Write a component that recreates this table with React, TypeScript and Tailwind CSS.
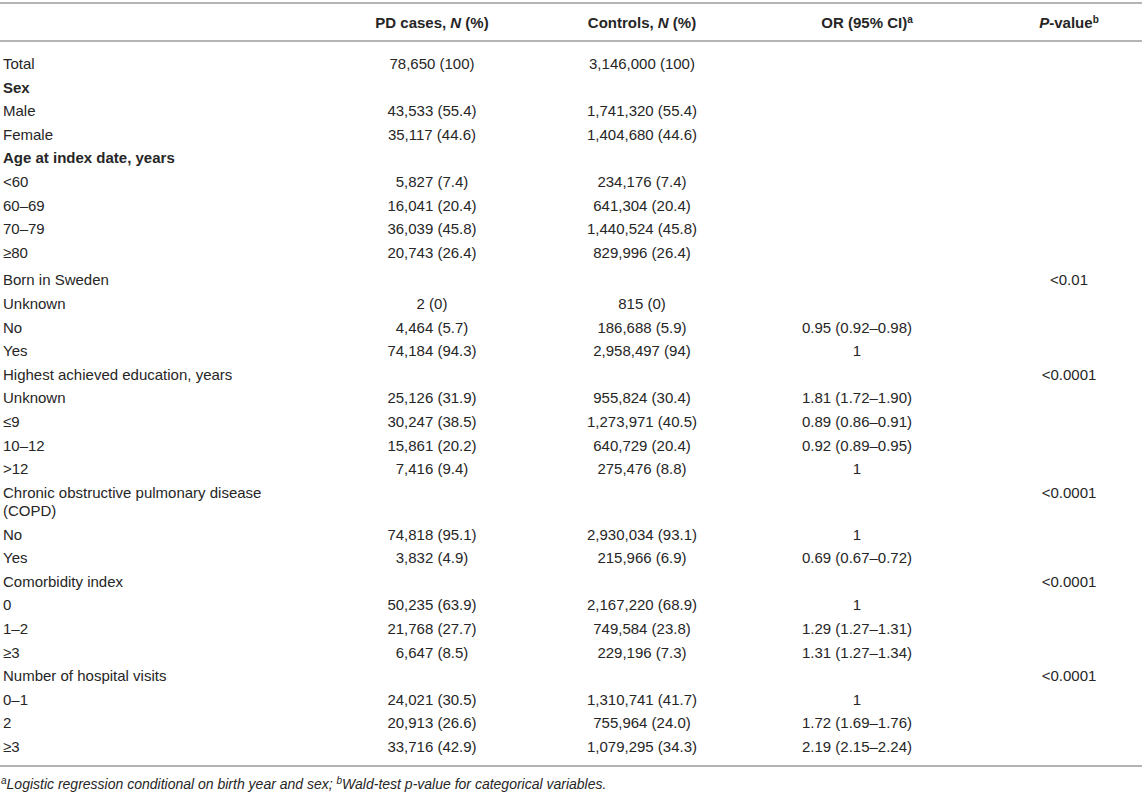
import React from 'react';

type Row = {
  label: React.ReactNode;
  pd?: string;
  ctrl?: string;
  or?: string;
  p?: string;
  bold?: boolean;
  tall?: boolean;
  gap?: boolean;
};

const rows: Row[] = [
  { label: 'Total', pd: '78,650 (100)', ctrl: '3,146,000 (100)' },
  { label: 'Sex', bold: true },
  { label: 'Male', pd: '43,533 (55.4)', ctrl: '1,741,320 (55.4)' },
  { label: 'Female', pd: '35,117 (44.6)', ctrl: '1,404,680 (44.6)' },
  { label: 'Age at index date, years', bold: true },
  { label: '<60', pd: '5,827 (7.4)', ctrl: '234,176 (7.4)' },
  { label: '60–69', pd: '16,041 (20.4)', ctrl: '641,304 (20.4)' },
  { label: '70–79', pd: '36,039 (45.8)', ctrl: '1,440,524 (45.8)' },
  { label: '≥80', pd: '20,743 (26.4)', ctrl: '829,996 (26.4)' },
  { label: 'Born in Sweden', p: '<0.01', gap: true },
  { label: 'Unknown', pd: '2 (0)', ctrl: '815 (0)' },
  { label: 'No', pd: '4,464 (5.7)', ctrl: '186,688 (5.9)', or: '0.95 (0.92–0.98)' },
  { label: 'Yes', pd: '74,184 (94.3)', ctrl: '2,958,497 (94)', or: '1' },
  { label: 'Highest achieved education, years', p: '<0.0001' },
  { label: 'Unknown', pd: '25,126 (31.9)', ctrl: '955,824 (30.4)', or: '1.81 (1.72–1.90)' },
  { label: '≤9', pd: '30,247 (38.5)', ctrl: '1,273,971 (40.5)', or: '0.89 (0.86–0.91)' },
  { label: '10–12', pd: '15,861 (20.2)', ctrl: '640,729 (20.4)', or: '0.92 (0.89–0.95)' },
  { label: '>12', pd: '7,416 (9.4)', ctrl: '275,476 (8.8)', or: '1' },
  {
    label: (
      <>
        Chronic obstructive pulmonary disease
        <br />
        (COPD)
      </>
    ),
    p: '<0.0001',
    tall: true,
  },
  { label: 'No', pd: '74,818 (95.1)', ctrl: '2,930,034 (93.1)', or: '1' },
  { label: 'Yes', pd: '3,832 (4.9)', ctrl: '215,966 (6.9)', or: '0.69 (0.67–0.72)' },
  { label: 'Comorbidity index', p: '<0.0001' },
  { label: '0', pd: '50,235 (63.9)', ctrl: '2,167,220 (68.9)', or: '1' },
  { label: '1–2', pd: '21,768 (27.7)', ctrl: '749,584 (23.8)', or: '1.29 (1.27–1.31)' },
  { label: '≥3', pd: '6,647 (8.5)', ctrl: '229,196 (7.3)', or: '1.31 (1.27–1.34)' },
  { label: 'Number of hospital visits', p: '<0.0001' },
  { label: '0–1', pd: '24,021 (30.5)', ctrl: '1,310,741 (41.7)', or: '1' },
  { label: '2', pd: '20,913 (26.6)', ctrl: '755,964 (24.0)', or: '1.72 (1.69–1.76)' },
  { label: '≥3', pd: '33,716 (42.9)', ctrl: '1,079,295 (34.3)', or: '2.19 (2.15–2.24)' },
];

const cols = 'grid grid-cols-[330px_204px_216px_214px_178px]';

function App() {
  return (
    <div className="w-[1142px] h-[810px] bg-white pt-[2px] font-['Liberation_Sans',Arial,sans-serif] text-[15px] text-[#262626]">
      <div className={`${cols} items-center h-[40px] border-y-2 border-[#b4b4b4] font-bold`}>
        <div />
        <div className="text-center pt-[2px]">
          PD cases, <i>N</i> (%)
        </div>
        <div className="text-center pt-[2px]">
          Controls, <i>N</i> (%)
        </div>
        <div className="text-center pl-[20px] pt-[2px]">
          OR (95% CI)<sup className="text-[10px]">a</sup>
        </div>
        <div className="text-center pl-[32px] pt-[2px]">
          <i>P</i>-value<sup className="text-[10px]">b</sup>
        </div>
      </div>

      <div className="pt-[10px] pb-[6px] border-b-2 border-[#b4b4b4]">
        {rows.map((r, i) => (
          <div
            key={i}
            className={`${cols} items-start leading-[18px] ${r.tall ? 'h-[42px] pt-[3px]' : 'h-[23.6px] pt-[3px]'} ${r.gap ? 'mt-[4px]' : ''}`}
          >
            <div className={`pl-[3px] ${r.bold ? 'font-bold' : ''}`}>{r.label}</div>
            <div className="text-center">{r.pd}</div>
            <div className="text-center">{r.ctrl}</div>
            <div className="text-center">{r.or}</div>
            <div className="text-center pl-[32px]">{r.p}</div>
          </div>
        ))}
      </div>

      <div className="pt-[7px] pl-[1px] italic text-[14px]">
        <sup className="text-[10px]">a</sup>Logistic regression conditional on birth year and sex;{' '}
        <sup className="text-[10px]">b</sup>Wald-test p-value for categorical variables.
      </div>
    </div>
  );
}

export default App;
